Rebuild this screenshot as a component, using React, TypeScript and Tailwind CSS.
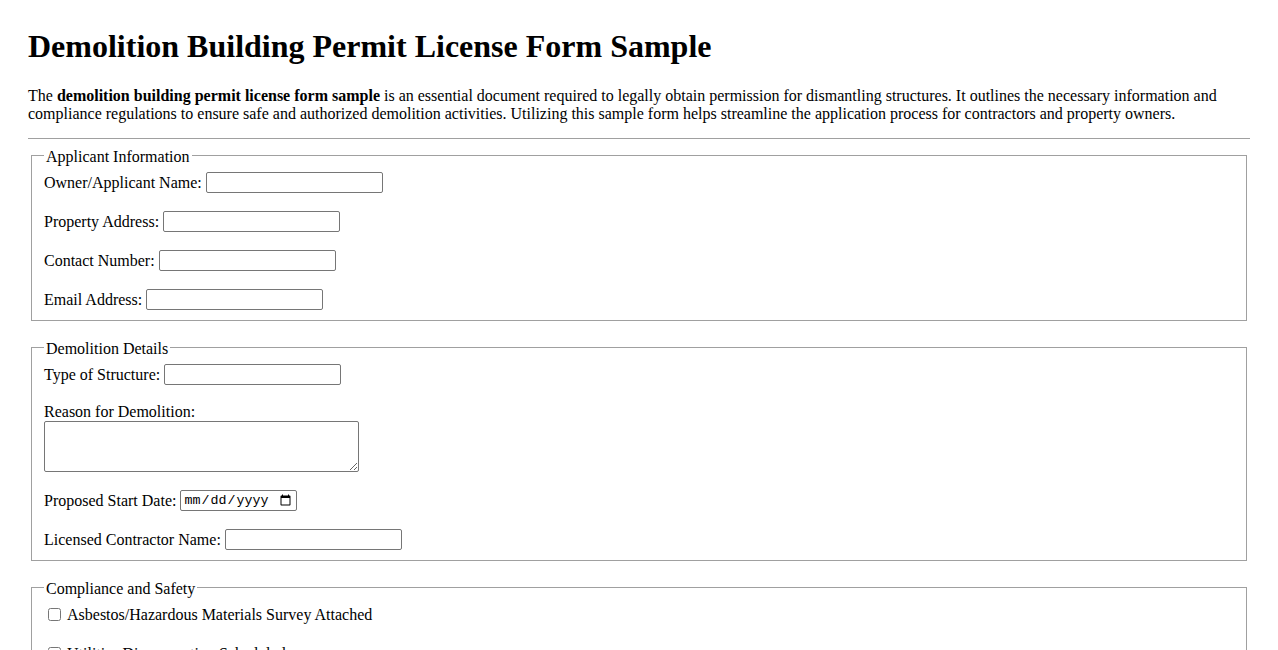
import React from 'react'

const inputCls =
  'h-[21px] w-[177px] rounded-[2px] border border-[#767676] bg-white px-[2px] py-[1px] text-[13.33px] font-["Liberation_Sans",Arial,sans-serif]'

function TextRow({ label }: { label: string }) {
  return (
    <div className="flex h-[21px] items-center">
      <label className="whitespace-nowrap">{label}</label>
      <input type="text" className={`ml-[4px] ${inputCls}`} />
    </div>
  )
}

function CheckRow({ label }: { label: string }) {
  return (
    <div className="flex h-[21px] items-center">
      <input type="checkbox" className="mt-[3px] mr-[3px] mb-[3px] ml-[4px] h-[13px] w-[13px]" />
      <label className="ml-[3px]">{label}</label>
    </div>
  )
}

function Section({ title, children, first }: { title: string; children: React.ReactNode; first?: boolean }) {
  return (
    <fieldset className={`${first ? '' : 'mt-[17px]'} mx-[3px] border border-[#a0a0a0] px-[12px] pt-[7px] pb-[10px]`}>
      <legend className="px-[2px] pt-[3px] leading-[16px]">{title}</legend>
      <div className="flex flex-col gap-[18px]">{children}</div>
    </fieldset>
  )
}

export default function App() {
  return (
    <div className="min-h-screen bg-white px-[28px] pt-[28px] pb-[28px] text-[16px] text-black font-['Liberation_Serif','Times_New_Roman',serif]">
      {/* heading */}
      <h1 className="mb-[22px] text-[32px] font-bold leading-[37px]">
        Demolition Building Permit License Form Sample
      </h1>
      <p className="mb-[15px] leading-[18px]">
        The <strong>demolition building permit license form sample</strong> is an essential document required to
        legally obtain permission for dismantling structures. It outlines the necessary information and compliance
        regulations to ensure safe and authorized demolition activities. Utilizing this sample form helps streamline
        the application process for contractors and property owners.
      </p>
      <hr className="mb-[7px] border-t border-[#a0a0a0]" />

      <form>
        <Section title="Applicant Information" first>
          <TextRow label="Owner/Applicant Name:" />
          <TextRow label="Property Address:" />
          <TextRow label="Contact Number:" />
          <TextRow label="Email Address:" />
        </Section>

        <Section title="Demolition Details">
          <TextRow label="Type of Structure:" />
          <div>
            <label className="block leading-[18px]">Reason for Demolition:</label>
            <textarea className="block h-[51px] w-[315px] rounded-[2px] border border-[#767676] bg-white px-[2px] py-[1px] text-[13.33px]" />
          </div>
          <div className="flex h-[21px] items-center">
            <label className="whitespace-nowrap">Proposed Start Date:</label>
            <input
              type="date"
              className="ml-[4px] h-[21px] w-[117px] rounded-[2px] border border-[#767676] bg-white px-[2px] text-[13.33px] font-['Liberation_Mono',monospace]"
            />
          </div>
          <TextRow label="Licensed Contractor Name:" />
        </Section>

        <Section title="Compliance and Safety">
          <CheckRow label="Asbestos/Hazardous Materials Survey Attached" />
          <CheckRow label="Utilities Disconnection Scheduled" />
          <CheckRow label="Neighbor Notification Completed" />
          <CheckRow label="Site Safety Plan Submitted" />
        </Section>

        <div className="mt-[16px]">
          <button type="submit" className="rounded-[2px] border border-[#767676] bg-[#efefef] px-[6px] py-[1px] text-[13.33px] font-['Liberation_Sans',Arial,sans-serif]">
            Submit Application
          </button>
        </div>
      </form>
    </div>
  )
}
